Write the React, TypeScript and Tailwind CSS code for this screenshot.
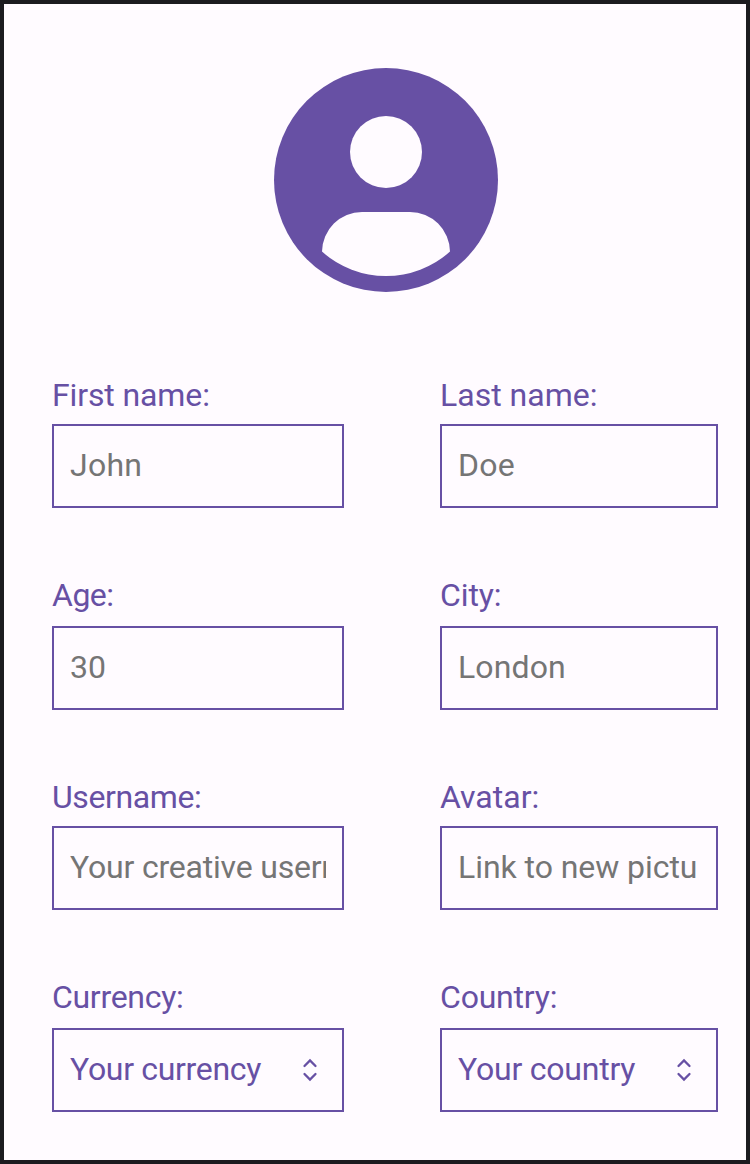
import React from "react";

type Field = { label: string; text: string; select?: boolean; labelTracking: string; textTracking: string };

const rows: { height: string; gap: string; fields: [Field, Field] }[] = [
  {
    height: "h-[200px]",
    gap: "mt-[10px]",
    fields: [
      { label: "First name:", text: "John", labelTracking: "tracking-[-0.12px]", textTracking: "tracking-[0.25px]" },
      { label: "Last name:", text: "Doe", labelTracking: "tracking-normal", textTracking: "tracking-[0.25px]" },
    ],
  },
  {
    height: "h-[202px]",
    gap: "mt-[12px]",
    fields: [
      { label: "Age:", text: "30", labelTracking: "tracking-[-0.5px]", textTracking: "tracking-normal" },
      { label: "City:", text: "London", labelTracking: "tracking-[-0.1px]", textTracking: "tracking-[0.12px]" },
    ],
  },
  {
    height: "h-[200px]",
    gap: "mt-[10px]",
    fields: [
      {
        label: "Username:",
        text: "Your creative usern",
        labelTracking: "tracking-[-0.4px]",
        textTracking: "tracking-[-0.2px]",
      },
      {
        label: "Avatar:",
        text: "Link to new pictu",
        labelTracking: "tracking-normal",
        textTracking: "tracking-[-0.06px]",
      },
    ],
  },
  {
    height: "h-[172px]",
    gap: "mt-[12px]",
    fields: [
      {
        label: "Currency:",
        text: "Your currency",
        select: true,
        labelTracking: "tracking-[-0.3px]",
        textTracking: "tracking-[-0.32px]",
      },
      {
        label: "Country:",
        text: "Your country",
        select: true,
        labelTracking: "tracking-[-0.2px]",
        textTracking: "tracking-[-0.22px]",
      },
    ],
  },
];

function FieldBox({ field, gap }: { field: Field; gap: string }) {
  return (
    <div className="flex flex-col">
      <div className={`h-[38px] text-[32px] leading-[38px] text-[#6750a4] ${field.labelTracking}`}>{field.label}</div>
      <div className={`${gap} flex h-[84px] items-center border-2 border-[#6750a4] px-4`}>
        <span
          className={`min-w-0 flex-1 overflow-hidden whitespace-nowrap pb-[2px] text-[32px] leading-[38px] ${
            field.textTracking
          } ${field.select ? "text-[#6750a4]" : "text-[#757575]"}`}
        >
          {field.text}
        </span>
        {field.select && (
          <svg
            className="mr-2 h-6 w-4 shrink-0"
            viewBox="0 0 16 24"
            fill="none"
            stroke="#6750a4"
            strokeWidth="2.3"
            strokeLinecap="round"
          >
            <path d="M2.5 8 8 2.4 13.5 8M2.5 16 8 21.6l5.5-5.6" />
          </svg>
        )}
      </div>
    </div>
  );
}

export default function App() {
  return (
    <main className="h-[1164px] w-[750px] overflow-hidden border-4 border-[#1c1b1f] bg-[#fffbff] font-['Roboto',sans-serif]">
      <div className="flex h-[372px] pl-[270px] pt-16">
        <svg className="h-56 w-56" viewBox="0 0 224 224">
          <circle cx="112" cy="112" r="112" fill="#6750a4" />
          <circle cx="112" cy="84" r="36" fill="#fffbff" />
          <path d="M48 183.6A40 40 0 0 1 88 144h48a40 40 0 0 1 40 39.6A96 96 0 0 1 48 183.6Z" fill="#fffbff" />
        </svg>
      </div>
      {rows.map((row) => (
        <div key={row.fields[0].label} className={`grid grid-cols-[292px_278px] gap-x-24 pl-12 ${row.height}`}>
          {row.fields.map((f) => (
            <FieldBox key={f.label} field={f} gap={row.gap} />
          ))}
        </div>
      ))}
    </main>
  );
}
